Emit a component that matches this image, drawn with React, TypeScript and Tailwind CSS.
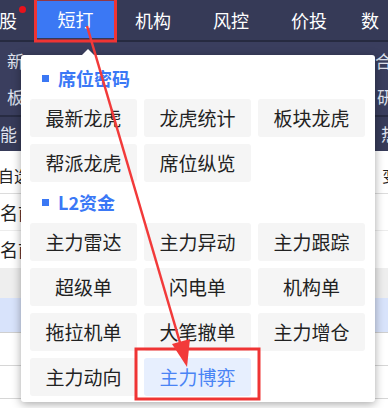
import React from 'react';

const font = { fontFamily: '"Noto Sans CJK SC", "Noto Sans", sans-serif' };

const groups = [
  { title: '席位密码', items: ['最新龙虎', '龙虎统计', '板块龙虎', '帮派龙虎', '席位纵览'] },
  { title: 'L2资金', items: ['主力雷达', '主力异动', '主力跟踪', '超级单', '闪电单', '机构单', '拖拉机单', '大笔撤单', '主力增仓', '主力动向', '主力博弈'] },
];

const active = '主力博弈';

function NavBar() {
  return (
    <div className="h-[40px] bg-[#363a57] flex items-center text-white text-[18px] shrink-0">
      <div className="relative w-[37px] h-full flex items-center">
        <span className="-ml-[1px]">股</span>
        <span className="absolute left-[19px] top-[6px] w-[7px] h-[7px] rounded-full bg-[#e8121c]" />
      </div>
      <div className="w-[77px] h-[37px] mb-[1px] bg-[#3b78f4] flex items-center justify-center">短打</div>
      <div className="w-[78px] flex justify-center">机构</div>
      <div className="w-[78px] flex justify-center">风控</div>
      <div className="w-[78px] flex justify-center">价投</div>
      <div className="pl-[13px]">数</div>
    </div>
  );
}

function DarkPanel() {
  return (
    <div className="shrink-0 text-[#dfe2ee] text-[17px]">
      <div className="h-[2px] bg-[#262a40]" />
      <div className="h-[73px] bg-[#3a3e5e] flex flex-col">
        <div className="h-[37px] flex items-center justify-between pl-[7px]">
          <span>新</span>
          <span className="-mr-[4px]">合</span>
        </div>
        <div className="h-[36px] flex items-center justify-between pl-[7px]">
          <span>板</span>
          <span className="-mr-[6px]">研</span>
        </div>
      </div>
      <div className="h-[2px] bg-[#282c43]" />
      <div className="h-[34px] bg-[#373b59] flex items-center justify-between">
        <span>能</span>
        <span className="-mr-[10px]">热</span>
      </div>
    </div>
  );
}

function ListArea() {
  return (
    <div className="flex-1 bg-white text-[#222] text-[18px]">
      <div className="h-[43px] flex items-end pb-[6px] justify-between border-b border-[#dcdcdc]">
        <span className="-ml-[2px] text-[16px]">自选</span>
        <span className="-mr-[10px] text-[16px]">变</span>
      </div>
      <div className="h-[37px] flex items-center border-b border-[#ececec]">
        <span>名前</span>
      </div>
      <div className="h-[37px] flex items-center">
        <span>名前</span>
      </div>
      <div className="h-[30px] bg-[#eeeeee]" />
      <div className="h-[35px] bg-[#d8e3fb] border-b border-[#cfcfcf]" />
      <div className="h-[33px] border-b border-[#d6d6d6]" />
      <div className="h-[33px] border-b border-[#d6d6d6]" />
    </div>
  );
}

function Popup() {
  return (
    <div className="absolute left-[21px] top-[55px] w-[354px] h-[347px] bg-white rounded-[3px] shadow-[0_2px_10px_rgba(0,0,0,0.35)] pt-[13px] px-[9px]">
      <div className="absolute left-[61px] -top-[6px] w-0 h-0 border-l-[6px] border-r-[6px] border-b-[6px] border-l-transparent border-r-transparent border-b-white" />
      {groups.map((g, gi) => (
        <div key={g.title} className={gi > 0 ? 'mt-[10px]' : ''}>
          <div className="h-[20px] flex items-center pl-[12px] gap-[9px]">
            <span className="w-[7px] h-[7px] bg-[#3b78f4]" />
            <span className="text-[18px] font-bold text-[#3a78f6] leading-none">{g.title}</span>
          </div>
          <div className="mt-[11px] grid grid-cols-[107px_107px_107px] gap-[7px]">
            {g.items.map((it) => (
              <div
                key={it}
                className={
                  'h-[38px] rounded-[3px] flex items-center justify-center text-[19px] ' +
                  (it === active ? 'bg-[#e7effe] text-[#4a84f5]' : 'bg-[#f5f5f5] text-[#222]')
                }
              >
                {it}
              </div>
            ))}
          </div>
        </div>
      ))}
    </div>
  );
}

function Marks() {
  return (
    <svg className="absolute inset-0 pointer-events-none" width="388" height="408" viewBox="0 0 388 408">
      <rect x="35.5" y="-1" width="80" height="42" fill="none" stroke="#ef3434" strokeWidth="3" />
      <rect x="136" y="349" width="123" height="50" fill="none" stroke="#ef3434" strokeWidth="3" />
      <line x1="87" y1="26" x2="181" y2="346" stroke="#f23a3a" strokeWidth="2.5" />
      <polygon points="187,367 172,344 190,339" fill="#f23a3a" />
    </svg>
  );
}

export default function App() {
  return (
    <div className="relative w-[388px] h-[408px] overflow-hidden flex flex-col bg-white" style={font}>
      <NavBar />
      <DarkPanel />
      <ListArea />
      <Popup />
      <Marks />
    </div>
  );
}
